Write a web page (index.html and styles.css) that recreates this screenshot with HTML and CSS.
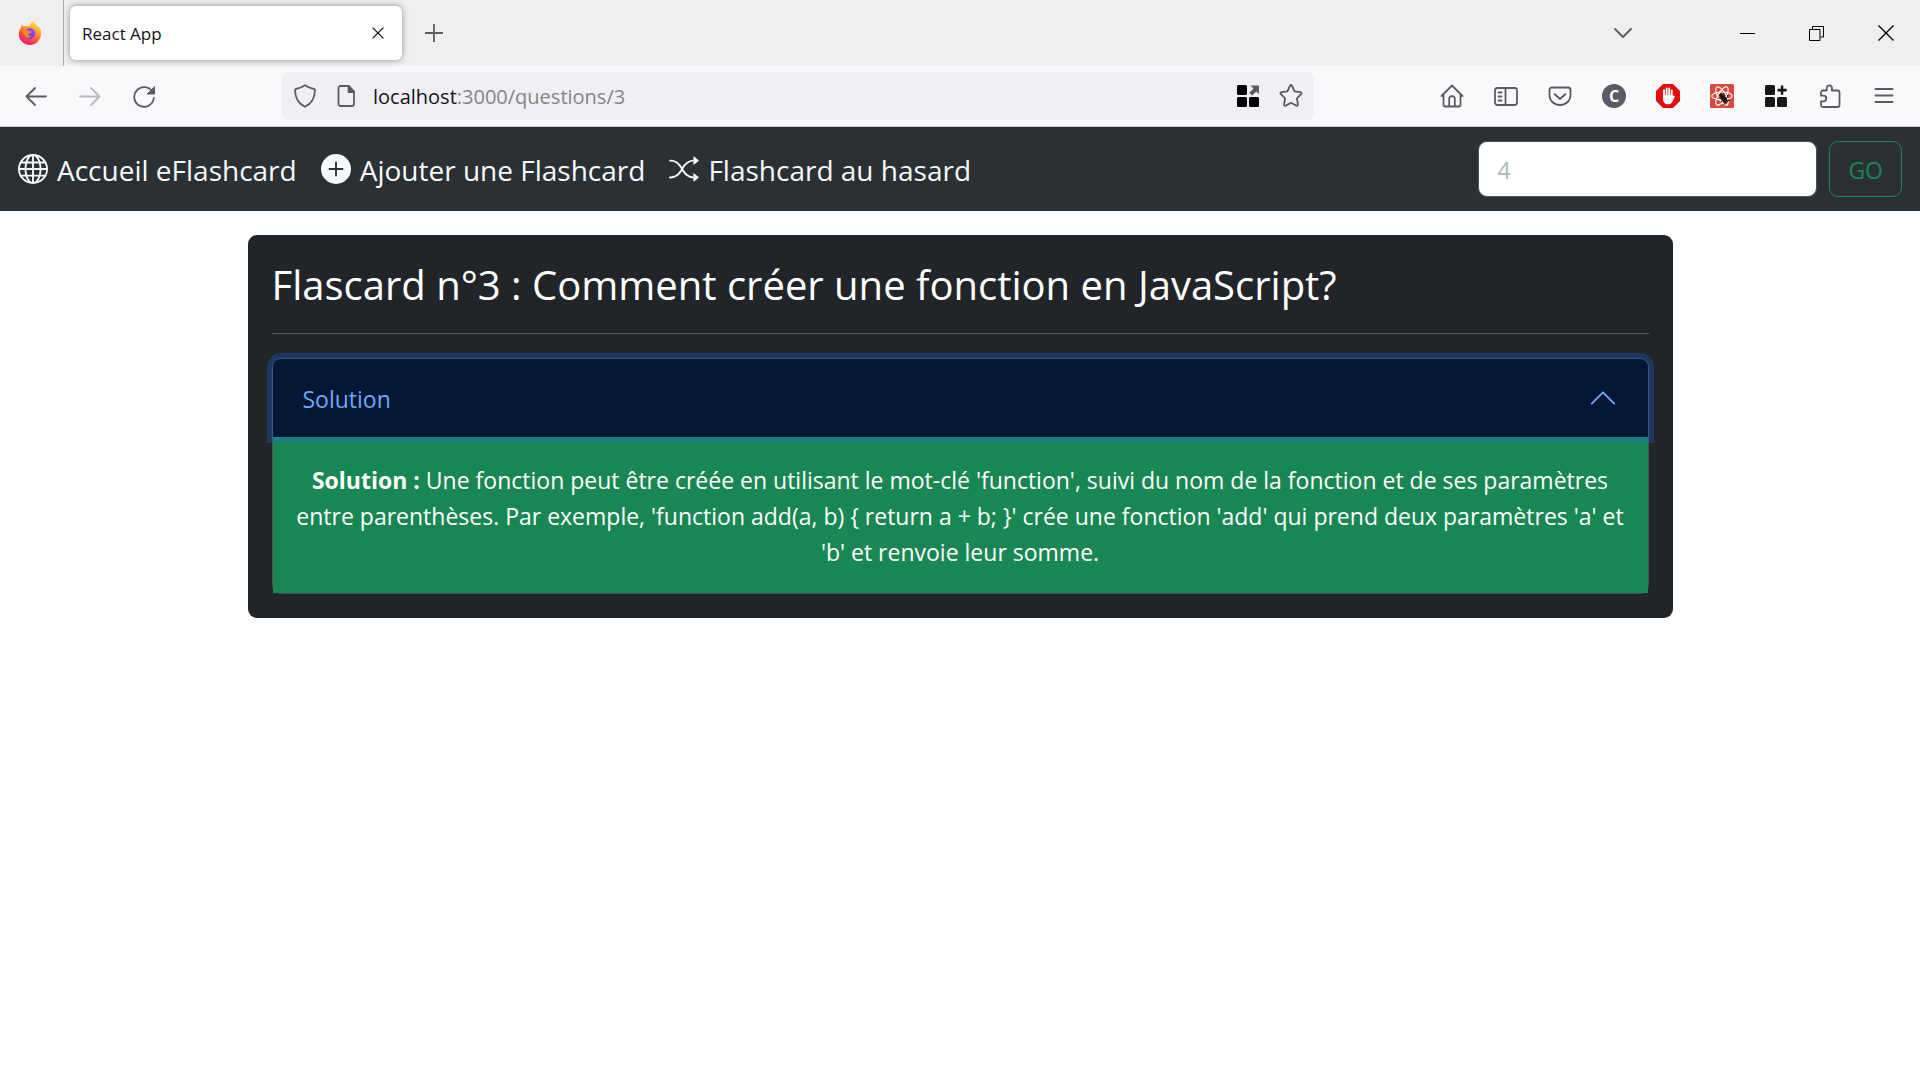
FILE: index.html
```html
<!DOCTYPE html>
<html lang="fr">
<head>
<meta charset="utf-8">
<title>React App</title>
<link rel="stylesheet" href="styles.css">
</head>
<body>
<header class="browser">
  <div class="tabbar">
    <button class="firefox" aria-label="Firefox View">
      <svg width="24" height="26" viewBox="0 0 24 26">
        <defs>
          <linearGradient id="fox" x1="0.8" y1="0" x2="0.3" y2="1"><stop offset="0" stop-color="#fff44f"/><stop offset=".35" stop-color="#ffa52a"/><stop offset=".7" stop-color="#ff4a41"/><stop offset="1" stop-color="#e5177b"/></linearGradient>
          <linearGradient id="globe" x1="1" y1="0" x2="0" y2="1"><stop offset="0" stop-color="#b14bff"/><stop offset="1" stop-color="#4a3fd0"/></linearGradient>
        </defs>
        <path fill="url(#fox)" d="M15 1c2 2 3 3.500 4 5 1 0 2 .5 2.500 1.500C23 9.500 23.500 12 23 15c-1 6-5.500 10-11 10S.8 20.500.8 14.500C.8 11 2 9 3 7.500c0-1 .3-2 1-3 .6 1 1.200 1.600 2 2 1-.4 2-.5 3-.3C10 6 11 5.500 12 5.800c.5-2 1.500-3.800 3-4.800z"/>
        <circle cx="12" cy="13.500" r="5.400" fill="url(#globe)"/>
        <path fill="#ff8a24" d="M5 11c2-2 4-1.500 6 .3l3 .2c-.5 1.500-2 1.600-3.500 2.200-.5 1.600 1 2.800 3 2.300-2 2.600-6 2-7-1z"/>
      </svg>
    </button>
    <div class="tab">
      <span class="tab-title">React App</span>
      <button class="plain" aria-label="Fermer"><svg width="12" height="12" viewBox="0 0 12 12" fill="none" stroke="#111" stroke-width="1.300"><path d="M.6.6l10.800 10.800M11.400.6L.6 11.400"/></svg></button>
    </div>
    <button class="plain newtab" aria-label="Nouvel onglet"><svg width="18" height="18" viewBox="0 0 18 18" stroke="#5b5b66" stroke-width="1.800"><path d="M9 0v18M0 9h18"/></svg></button>
    <button class="plain tablist" aria-label="Lister les onglets"><svg width="18" height="10" viewBox="0 0 18 10" fill="none" stroke="#5b5b66" stroke-width="1.800" stroke-linecap="round" stroke-linejoin="round"><path d="M1 1l8 8 8-8"/></svg></button>
    <div class="window-controls">
      <button class="plain" aria-label="Réduire"><svg width="15" height="15" viewBox="0 0 15 15" fill="none" stroke="#000"><path d="M0 7.500h15"/></svg></button>
      <button class="plain" aria-label="Restaurer"><svg width="15" height="15" viewBox="0 0 15 15" fill="none" stroke="#000"><path d="M.5 3.500h10.500v11H.5zM3.500 3.500v-3h11v10.500h-3"/></svg></button>
      <button class="plain" aria-label="Fermer la fenêtre"><svg width="16" height="16" viewBox="0 0 16 16" fill="none" stroke="#000" stroke-width="1.300"><path d="M.5.5l15 15M15.500.5l-15 15"/></svg></button>
    </div>
  </div>
  <div class="toolbar">
    <div class="navigation">
      <button class="tool" aria-label="Précédent"><svg width="24" height="24" viewBox="0 0 24 24" class="line"><path d="M22 12.500H2.500M11 4l-8.500 8.500L11 21"/></svg></button>
      <button class="tool faded" aria-label="Suivant"><svg width="24" height="24" viewBox="0 0 24 24" class="line"><path d="M2 12.500h19.500M13 4l8.500 8.500L13 21"/></svg></button>
      <button class="tool" aria-label="Actualiser"><svg width="24" height="24" viewBox="0 0 24 24" class="line"><path d="M20.500 8A9.800 9.800 0 1 0 21.800 14"/><path fill="#5b5b66" stroke-width="1" d="M22.500 3v7h-7z"/></svg></button>
    </div>
    <div class="urlbar">
      <svg width="24" height="24" viewBox="0 0 24 24" class="line"><path d="M12 1.200c-3 2-6 3.200-9.200 3.800-.7.200-.9.600-.8 1.200.3 8 3.500 13.500 10 16.600 6.500-3.100 9.700-8.600 10-16.600 0-.6-.2-1-.8-1.200C18 4.400 15 3.200 12 1.200z"/></svg>
      <svg width="18" height="22" viewBox="0 0 18 22" class="line"><path d="M3.500 1h8.500l5 5.500V19a2 2 0 0 1-2 2H3.500a2 2 0 0 1-2-2V3a2 2 0 0 1 2-2z"/><path fill="#5b5b66" d="M11.500 1v6h5.500z"/></svg>
      <span class="url"><span class="host">localhost</span>:3000/questions/3</span>
      <svg width="22" height="22" viewBox="0 0 22 22"><g><rect width="10" height="10" rx="1.500"/><rect y="12" width="10" height="10" rx="1.500"/><rect x="12" y="12" width="10" height="10" rx="1.500"/></g><path fill="#5b5b66" d="M13.500.5H22V9l-2.700-2.600-4.200 4.100-2.800-2.700 4.200-4.300z"/></svg>
      <svg width="24" height="24" viewBox="0 0 24 24" class="line"><path d="M10.900 2q1.100-2 2.200 0l2.500 5.300 5.800.9q2 .5.700 2L17.900 14.400l1 5.900q.2 2-1.700 1.300L12 18.800l-5.200 2.800q-1.900.7-1.700-1.300l1-5.900-4.200-4.200q-1.300-1.500.7-2l5.800-.9z"/></svg>
    </div>
    <div class="extensions">
      <button class="tool" aria-label="Accueil"><svg width="24" height="24" viewBox="0 0 24 24" class="line"><path d="M1.500 12L12 1.500 22.500 12M3.500 10.500v10a2 2 0 0 0 2 2h13a2 2 0 0 0 2-2v-10M9.200 22v-7a2.800 2.800 0 0 1 5.600 0v7"/></svg></button>
      <button class="tool" aria-label="Panneaux latéraux"><svg width="24" height="24" viewBox="0 0 24 24" class="line"><rect x="1" y="4" width="22" height="17" rx="2.500"/><path d="M11.500 4v17M4.500 8.500h3M4.500 12.500h3M4.500 16.500h3"/></svg></button>
      <button class="tool" aria-label="Pocket"><svg width="24" height="24" viewBox="0 0 24 24" class="line"><path d="M4 3.500h16a2.500 2.500 0 0 1 2.500 2.500v5c0 6-4.700 10-10.500 10S1.500 17 1.500 11V6A2.500 2.500 0 0 1 4 3.500zM6.500 10l5.500 5 5.500-5"/></svg></button>
      <button class="tool badge" aria-label="Compte">C</button>
      <button class="tool" aria-label="Bloqueur"><svg width="24" height="24" viewBox="0 0 24 24"><path fill="#e40d0d" d="M7 0h10l7 7v10l-7 7H7l-7-7V7z"/><path fill="none" stroke="#fff" stroke-width="1.900" stroke-linecap="round" d="M8 13V6.500M10.600 12V4.500M13.200 12V4.500M15.700 13V6.500M17.800 12.500L15.500 17"/><path fill="#fff" d="M7.050 11h9.600v4.500c0 3-1.800 4.800-4.600 4.800-3.300 0-5-2.300-5-5.300z"/></svg></button>
      <button class="tool" aria-label="React Developer Tools"><svg width="24" height="24" viewBox="0 0 24 24"><rect width="24" height="24" rx="1.500" fill="#d64b3b"/><g fill="none" stroke="#fff" stroke-width="1.100"><ellipse cx="12" cy="12" rx="10.300" ry="4"/><ellipse cx="12" cy="12" rx="10.300" ry="4" transform="rotate(60 12 12)"/><ellipse cx="12" cy="12" rx="10.300" ry="4" transform="rotate(120 12 12)"/></g><g fill="#231512" stroke="#231512"><ellipse cx="14" cy="15" rx="2" ry="4" transform="rotate(-40 14 15)"/><circle cx="11" cy="11.200" r="1.300"/><path fill="none" d="M8.500 14l4 0M10.500 18.500l3-2.500M14 21l1.500-3M13.500 9l1 4M18 11l-1.500 4M20 16.500h-3"/></g></svg></button>
      <button class="tool" aria-label="Extensions web"><svg width="22" height="22" viewBox="0 0 22 22" fill="#18181a"><rect width="10" height="10" rx="1.500"/><rect y="12" width="10" height="10" rx="1.500"/><rect x="12" y="12" width="10" height="10" rx="1.500"/><path d="M15.800.5h2.500v3.300h3.400v2.600h-3.400v3.300h-2.500V6.400h-3.300V3.800h3.300z"/></svg></button>
      <button class="tool" aria-label="Extensions"><svg width="24" height="24" viewBox="0 0 24 24" class="line"><path d="M5 6.500h3.700V4a2.600 2.600 0 0 1 5.200 0v2.500H19.500a2 2 0 0 1 2 2V21a2 2 0 0 1-2 2H5a2 2 0 0 1-2-2v-3.700H5.500a2.800 2.800 0 0 0 0-5.600H3V8.500a2 2 0 0 1 2-2z"/></svg></button>
      <button class="tool" aria-label="Menu"><svg width="24" height="24" viewBox="0 0 24 24" class="line"><path d="M3.500 5h17M3.500 11.500h17M3.500 18h17"/></svg></button>
    </div>
  </div>
</header>

<nav class="navbar">
  <a class="nav-link" href="#"><svg width="30" height="30" viewBox="0 0 16 16" fill="currentColor"><path d="M0 8a8 8 0 1 1 16 0A8 8 0 0 1 0 8zm7.500-6.923c-.67.204-1.335.82-1.887 1.855A7.970 7.970 0 0 0 5.145 4H7.500V1.077zM4.090 4a9.267 9.267 0 0 1 .64-1.539 6.700 6.700 0 0 1 .597-.933A7.025 7.025 0 0 0 2.255 4H4.090zm-.582 3.500c.03-.877.138-1.718.312-2.500H1.674a6.958 6.958 0 0 0-.656 2.500h2.490zM4.847 5a12.500 12.500 0 0 0-.338 2.500H7.500V5H4.847zM8.500 5v2.500h2.990a12.495 12.495 0 0 0-.337-2.500H8.500zM4.510 8.500a12.500 12.500 0 0 0 .337 2.500H7.500V8.500H4.510zm3.990 0V11h2.653c.187-.765.306-1.608.338-2.500H8.500zM5.145 12c.138.386.295.744.468 1.068.552 1.035 1.218 1.650 1.887 1.855V12H5.145zm.182 2.472a6.696 6.696 0 0 1-.597-.933A9.268 9.268 0 0 1 4.090 12H2.255a7.024 7.024 0 0 0 3.072 2.472zM3.820 11a13.652 13.652 0 0 1-.312-2.500h-2.490c.062.890.291 1.733.656 2.500H3.820zm6.853 3.472A7.024 7.024 0 0 0 13.745 12H11.910a9.270 9.270 0 0 1-.640 1.539 6.688 6.688 0 0 1-.597.933zM8.500 12v2.923c.670-.204 1.335-.820 1.887-1.855.173-.324.330-.682.468-1.068H8.500zm3.680-1h2.146c.365-.767.594-1.610.656-2.500h-2.490a13.650 13.650 0 0 1-.312 2.500zm2.802-3.500a6.959 6.959 0 0 0-.656-2.500H12.180c.174.782.282 1.623.312 2.500h2.490zM11.270 2.461c.247.464.462.980.640 1.539h1.835a7.024 7.024 0 0 0-3.072-2.472c.218.284.418.598.597.933zM10.855 4a7.966 7.966 0 0 0-.468-1.068C9.835 1.897 9.170 1.282 8.500 1.077V4h2.355z"/></svg><span class="label">Accueil eFlashcard</span></a>
  <a class="nav-link" href="#"><svg width="30" height="30" viewBox="0 0 16 16" fill="currentColor"><path d="M16 8A8 8 0 1 1 0 8a8 8 0 0 1 16 0zM8.500 4.500a.5.5 0 0 0-1 0v3h-3a.5.5 0 0 0 0 1h3v3a.5.5 0 0 0 1 0v-3h3a.5.5 0 0 0 0-1h-3v-3z"/></svg><span class="label">Ajouter une Flashcard</span></a>
  <a class="nav-link" href="#"><svg width="30" height="30" viewBox="0 0 16 16" fill="currentColor"><path fill-rule="evenodd" d="M0 3.500A.5.5 0 0 1 .5 3H1c2.202 0 3.827 1.240 4.874 2.418.490.552.865 1.102 1.126 1.532.260-.430.636-.980 1.126-1.532C9.173 4.240 10.798 3 13 3v1c-1.798 0-3.173 1.010-4.126 2.082A9.624 9.624 0 0 0 7.556 8a9.624 9.624 0 0 0 1.317 1.918C9.828 10.990 11.204 12 13 12v1c-2.202 0-3.827-1.240-4.874-2.418A10.595 10.595 0 0 1 7 9.050c-.260.430-.636.980-1.126 1.532C4.827 11.760 3.202 13 1 13H.5a.5.5 0 0 1 0-1H1c1.798 0 3.173-1.010 4.126-2.082A9.624 9.624 0 0 0 6.444 8a9.624 9.624 0 0 0-1.317-1.918C4.172 5.010 2.796 4 1 4H.5a.5.5 0 0 1-.5-.5z"/><path d="M13 5.466V1.534a.25.25 0 0 1 .410-.192l2.360 1.966c.120.100.120.284 0 .384l-2.360 1.966a.25.25 0 0 1-.410-.192zm0 9v-3.932a.25.25 0 0 1 .410-.192l2.360 1.966c.120.100.120.284 0 .384l-2.360 1.966a.25.25 0 0 1-.410-.192z"/></svg><span class="label">Flashcard au hasard</span></a>
  <form class="search">
    <input class="search-input" type="text" placeholder="4" aria-label="Numéro de flashcard">
    <button class="go" type="button">GO</button>
  </form>
</nav>

<main class="card">
  <h1 class="title">Flascard n°3 : Comment créer une fonction en JavaScript?</h1>
  <hr class="rule">
  <section class="accordion">
    <button class="accordion-button" aria-expanded="true"><span class="label">Solution</span><svg width="30" height="30" viewBox="0 0 16 16" fill="#6ea8fe"><path d="M14.354 11.354a.5.5 0 0 1-.708 0L8 5.707l-5.646 5.647a.5.5 0 0 1-.708-.708l6-6a.5.5 0 0 1 .708 0l6 6a.5.5 0 0 1 0 .708z"/></svg></button>
    <p class="accordion-body"><strong>Solution :</strong> Une fonction peut être créée en utilisant le mot-clé 'function', suivi du nom de la fonction et de ses paramètres entre parenthèses. Par exemple, 'function add(a, b) { return a + b; }' crée une fonction 'add' qui prend deux paramètres 'a' et 'b' et renvoie leur somme.</p>
  </section>
</main>
</body>
</html>
```
FILE: styles.css
```css
* { box-sizing: border-box; }
body {
  margin: 0;
  background: #fff;
  font-family: "Open Sans", "Noto Sans", sans-serif;
}
button { font-family: inherit; margin: 0; padding: 0; border: 0; background: none; }
svg { display: block; flex: none; }
.line { fill: none; stroke: #5b5b66; stroke-width: 1.8; stroke-linecap: round; stroke-linejoin: round; }
.plain { display: flex; align-items: center; justify-content: center; }
.label { padding-top: 2px; }

.tabbar { display: flex; align-items: center; height: 66px; background: #efefef; }
.firefox { display: flex; align-items: center; justify-content: center; width: 64px; height: 66px; padding-right: 4px; border-right: 1px solid #ababad; }
.tab {
  display: flex; align-items: center; justify-content: space-between;
  width: 332px; height: 54px; margin-left: 6px; padding: 0 18px 0 12px;
  border-radius: 6px; background: #fff; box-shadow: 0 0 6px rgba(0, 0, 0, .4);
}
.tab-title { padding-top: 2px; font-size: 17px; line-height: 24px; color: #15141a; }
.newtab { margin-left: 23px; }
.tablist { margin-left: auto; margin-right: 81px; }
.window-controls { display: flex; }
.window-controls .plain { width: 69px; height: 66px; }

.toolbar {
  display: flex; align-items: center; height: 61px; padding: 0 9px;
  background: #f9f9fb; border-bottom: 1px solid #c0c8c8;
}
.navigation, .extensions { display: flex; }
.tool { display: flex; align-items: center; justify-content: center; width: 54px; height: 48px; }
.faded { opacity: .4; }
.urlbar {
  display: flex; align-items: center; flex: 1; height: 48px;
  margin: 0 111px; padding: 0 11px; border-radius: 6px; background: #f0f0f4;
}
.url { flex: 1; margin-left: 18px; padding-top: 2px; font-size: 20px; line-height: 30px; color: #84848a; }
.urlbar svg + svg { margin-left: 20px; }
.host { color: #15141a; }
.badge { width: 24px; height: 24px; margin: 12px 15px; border-radius: 12px; background: #5b5b66; color: #fff; font-size: 16px; font-weight: 700; }

.navbar { display: flex; align-items: center; gap: 24px; height: 84px; padding: 0 18px; background: #2b3035; }
.nav-link { display: flex; align-items: center; gap: 9px; color: #f8f9fa; font-size: 28px; line-height: 44px; text-decoration: none; white-space: nowrap; }
.search { display: flex; align-items: center; gap: 12px; margin-left: auto; }
.search-input {
  width: 339px; height: 56px; padding: 10px 18px 8px; border: 1px solid #495057; border-radius: 9px;
  background: #fff; color: #212529; font-family: inherit; font-size: 23px;
}
.search-input::placeholder { color: #adb5bd; opacity: 1; }
.go { height: 56px; padding: 2px 18px 0; border: 1px solid #198754; border-radius: 9px; color: #198754; font-size: 23px; }

.card { max-width: 1425px; margin: 24px auto; padding: 24px; border-radius: 9px; background: #212529; color: #fff; }
.title { margin: 0; font-size: 40px; font-weight: 400; line-height: 52px; }
.rule { height: 1px; margin: 22px 0 24px; border: 0; background: #53575a; }
.accordion { border: 1px solid #495057; border-radius: 9px; }
.accordion-button {
  display: flex; align-items: center; justify-content: space-between;
  width: 100%; height: 78px; padding: 0 30px; border-radius: 8px 8px 0 0;
  background: #031633; color: #6ea8fe; font-size: 23px; box-shadow: 0 0 0 6px rgba(13, 110, 253, .25);
}
.accordion-body { margin: 0; padding: 25px 20px 23px; background: #198754; font-size: 23px; line-height: 36px; text-align: center; box-shadow: inset 0 6px #188080; }
```
